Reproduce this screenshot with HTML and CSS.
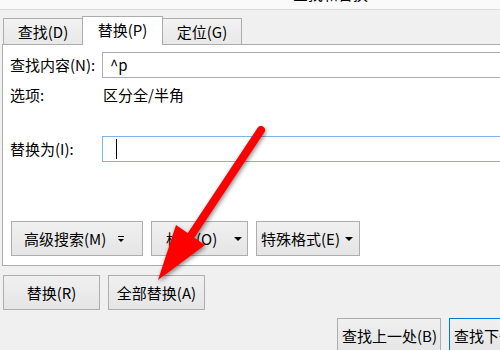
FILE: index.html
```html
<!DOCTYPE html>
<html lang="zh-CN">
<head>
    <meta charset="UTF-8">
    <meta name="viewport" content="width=device-width, initial-scale=1.0">
    <title>查找和替换</title>
    <link rel="stylesheet" href="styles.css">
</head>
<body>
    <div class="titlebar"><span class="title">查找和替换</span></div>

    <div class="dialog">
        <div class="tabs">
            <div class="tab">查找(D)</div>
            <div class="tab active">替换(P)</div>
            <div class="tab">定位(G)</div>
        </div>

        <div class="panel">
            <div class="row">
                <span class="label">查找内容(N):</span>
                <div class="input">^p</div>
            </div>
            <div class="row options">
                <span class="label">选项:</span>
                <span>区分全/半角</span>
            </div>
            <div class="row replace">
                <span class="label">替换为(I):</span>
                <div class="input focused"><span class="caret"></span></div>
            </div>
            <div class="panel-buttons">
                <button class="btn btn-more">高级搜索(M)<span class="more"></span></button>
                <button class="btn btn-format">格式(O)<span class="drop"></span></button>
                <button class="btn btn-special">特殊格式(E)<span class="drop"></span></button>
            </div>
        </div>

        <div class="actions">
            <button class="btn">替换(R)</button>
            <button class="btn">全部替换(A)</button>
        </div>

        <div class="nav">
            <button class="btn">查找上一处(B)</button>
            <button class="btn default">查找下一处(F)</button>
        </div>
    </div>

    <svg class="arrow" width="500" height="350" viewBox="0 0 500 350">
        <line x1="261" y1="130" x2="192" y2="234" stroke="#ff0000" stroke-width="8" stroke-linecap="round"/>
        <polygon points="158,280 176,225 205,245" fill="#ff0000"/>
    </svg>
</body>
</html>
```

FILE: styles.css
```css
body { margin: 0; width: 500px; height: 350px; overflow: hidden; background: #f0f0f0; font-family: "Noto Sans CJK SC", "Microsoft YaHei", sans-serif; font-size: 15px; color: #000; position: relative; }
button { font-family: inherit; font-size: 15px; color: #000; }

.titlebar { height: 9px; background: #fafafa; border-bottom: 1px solid #dadada; overflow: hidden; padding-left: 293px; }
.title { display: block; margin-top: -16px; line-height: 20px; }

.dialog { width: 700px; }

.tabs { display: flex; align-items: flex-end; height: 35px; box-sizing: border-box; padding: 6px 0 0 3px; margin-bottom: -1px; position: relative; z-index: 1; }
.tab { width: 80px; height: 26px; box-sizing: border-box; border: 1px solid #acacac; border-bottom: none; background: linear-gradient(#f2f2f2, #e8e8e8); display: flex; align-items: center; justify-content: center; margin-bottom: 1px; margin-left: -1px; line-height: 20px; }
.tab:first-child { margin-left: 0; }
.tab.active { height: 29px; width: 81px; background: #fff; margin-bottom: 0; padding-bottom: 3px; }

.panel { margin-left: 2px; border: 1px solid #acacac; background: #fff; padding: 7px 0 9px 7px; }
.row { display: flex; align-items: center; line-height: 20px; }
.label { width: 92px; }
.input { flex: 1; height: 26px; box-sizing: border-box; border: 1px solid #acacac; padding-left: 7px; display: flex; align-items: center; }
.options { margin-top: 7px; height: 20px; }
.options .label { width: 93px; }
.replace { margin-top: 31px; }
.input.focused { border-color: #7eb4ea; padding-left: 13px; }
.caret { width: 1px; height: 20px; background: #000; }

.btn { height: 35px; box-sizing: border-box; border: 1px solid #adadad; background: linear-gradient(#f0f0f0, #e5e5e5); display: flex; align-items: center; justify-content: center; padding: 0; line-height: 20px; }
.panel-buttons { display: flex; gap: 8px; margin-top: 59px; padding-left: 1px; }
.btn-more { width: 132px; justify-content: flex-start; padding-left: 12px; }
.btn-format { width: 97px; justify-content: flex-start; padding-left: 14px; }
.btn-special { width: 104px; justify-content: flex-start; padding-left: 4px; }
.drop { margin-left: auto; margin-right: 5px; width: 0; height: 0; border-left: 4px solid transparent; border-right: 4px solid transparent; border-top: 4px solid #000; }
.btn-special .drop { margin-right: 6px; }
.more { margin-left: auto; margin-right: 18px; width: 0; height: 0; border-left: 3px solid transparent; border-right: 3px solid transparent; border-top: 3px solid #000; position: relative; margin-top: 3px; }
.more::before { content: ""; position: absolute; left: -3px; top: -6px; width: 6px; height: 1px; background: #000; }

.actions { display: flex; gap: 8px; margin: 9px 0 0 3px; }
.actions .btn { width: 97px; }

.nav { display: flex; gap: 8px; margin: 8px 0 0 337px; }
.nav .btn { width: 104px; justify-content: flex-start; padding-left: 4px; }
.nav .default { border-color: #0078d7; }

.arrow { position: absolute; left: 0; top: 0; pointer-events: none; filter: drop-shadow(1px 2px 2px rgba(0, 0, 0, 0.45)); }
```
